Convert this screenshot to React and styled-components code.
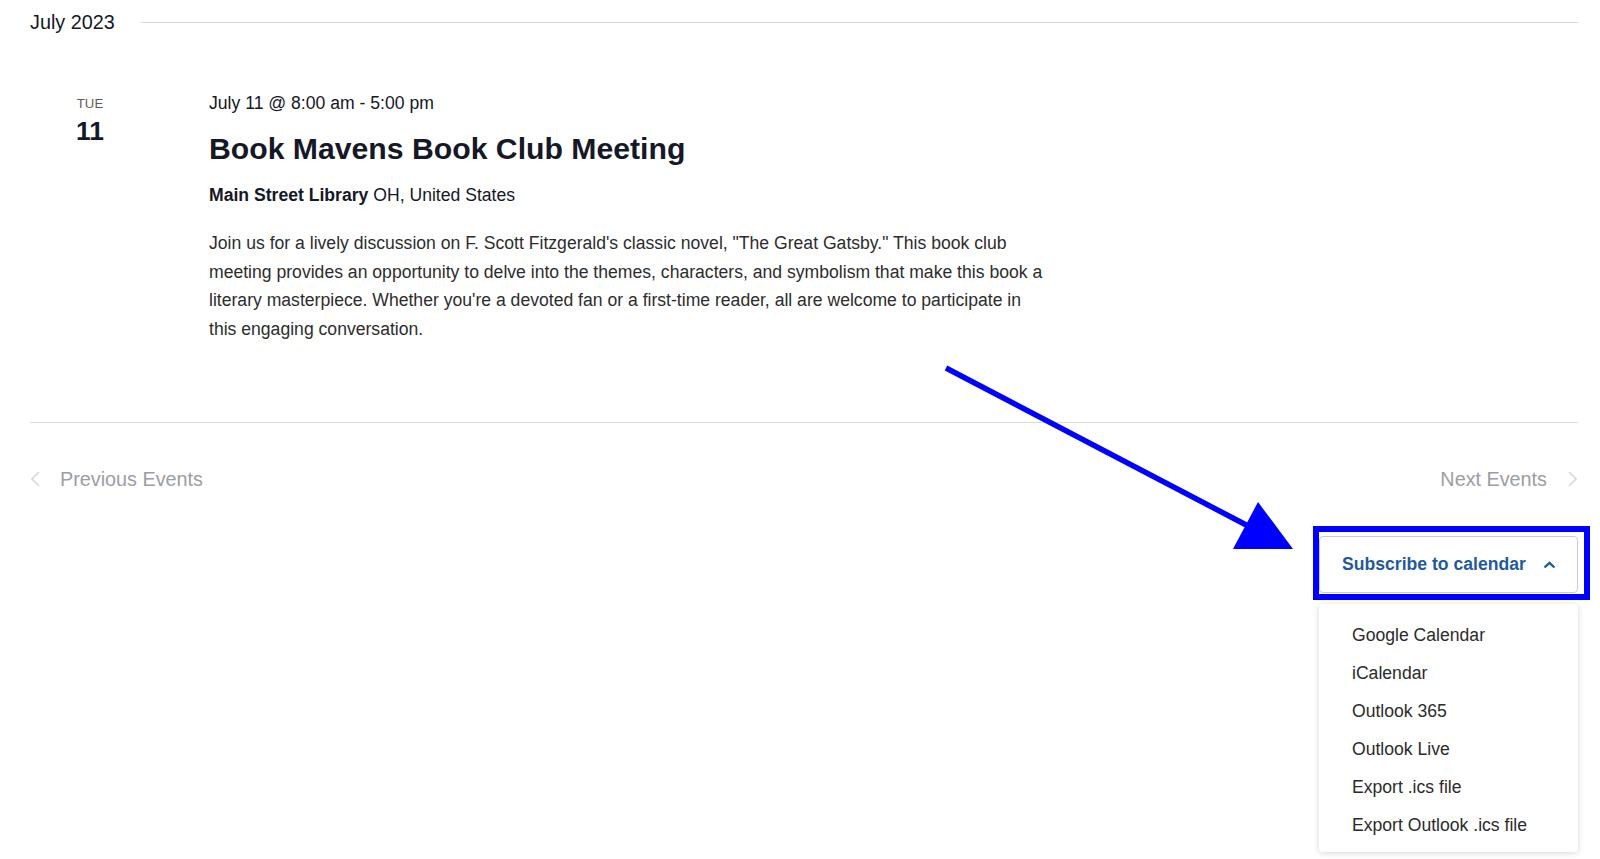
import styled, { createGlobalStyle } from 'styled-components'

const GlobalStyle = createGlobalStyle`
  html, body {
    margin: 0;
    padding: 0;
    background: #fff;
    font-family: "Liberation Sans", Arial, sans-serif;
    color: #141827;
  }
  * { box-sizing: border-box; }
`

const Page = styled.div`
  position: relative;
  min-height: 859px;
  padding: 10px 22px 0 30px;
`

const MonthHeader = styled.div`
  display: flex;
  align-items: center;
  gap: 26px;
`

const MonthLabel = styled.h2`
  margin: 0;
  font-size: 19.8px;
  font-weight: 400;
  line-height: 24px;
  color: #141827;
`

const Rule = styled.div`
  flex: 1;
  height: 1px;
  background: #d3d8e6;
`

const EventRow = styled.div`
  display: flex;
  margin-top: 56px;
`

const DateCol = styled.div`
  width: 120px;
  margin-right: 59px;
  display: flex;
  flex-direction: column;
  align-items: center;
  padding-top: 6px;
`

const DayName = styled.span`
  font-size: 13.2px;
  line-height: 16px;
  color: #5d5d5d;
  text-transform: uppercase;
`

const DayNum = styled.span`
  margin-top: 4px;
  font-size: 26.4px;
  font-weight: 700;
  line-height: 30px;
  color: #141827;
`

const Details = styled.div`
  flex: 1;
`

const Time = styled.div`
  font-size: 17.6px;
  line-height: 26px;
`

const Title = styled.h3`
  margin: 15px 0 0;
  font-size: 30.2px;
  font-weight: 700;
  line-height: 36px;
`

const Venue = styled.div`
  margin-top: 15px;
  font-size: 17.6px;
  line-height: 26px;

  strong { font-weight: 700; }
`

const Description = styled.p`
  margin: 21px 0 0;
  max-width: 838px;
  font-size: 17.6px;
  line-height: 28.6px;
  color: #2d2d2d;
`

const Divider = styled.div`
  margin-top: 79px;
  height: 1px;
  background: #dcdcdc;
`

const Nav = styled.nav`
  margin-top: 42px;
  display: flex;
  justify-content: space-between;
  font-size: 19.8px;
  line-height: 28px;
  color: #9b9ea4;
`

const NavLink = styled.span`
  display: flex;
  align-items: center;
  gap: ${p => p.$gap || 19}px;
`

const SubscribeRow = styled.div`
  margin-top: 43px;
  display: flex;
  justify-content: flex-end;
`

const SubscribeWrap = styled.div`
  width: 259px;
`

const ButtonFrame = styled.div`
  position: relative;
`

const SubscribeButton = styled.button`
  width: 100%;
  height: 57px;
  display: flex;
  align-items: center;
  gap: 17px;
  padding: 0 0 0 22px;
  background: #fff;
  border: 1px solid #c3cce0;
  border-radius: 4px;
  font-family: inherit;
  font-size: 17.6px;
  font-weight: 700;
  color: #1f5b9c;
  white-space: nowrap;
`

const Highlight = styled.div`
  position: absolute;
  top: -10px;
  left: -6px;
  right: -12px;
  bottom: -7px;
  border: 6px solid #0000ff;
  pointer-events: none;
`

const Dropdown = styled.ul`
  list-style: none;
  margin: 11px 0 0;
  padding: 12px 0 8px;
  background: #fff;
  border-radius: 4px;
  box-shadow: 0 1px 6px rgba(0, 0, 0, 0.16);
`

const Item = styled.li`
  padding-left: 33px;
  font-size: 17.6px;
  line-height: 38px;
  color: #2b2b2b;
`

const ArrowMark = styled.svg`
  position: absolute;
  left: 940px;
  top: 360px;
  pointer-events: none;
`

const Chevron = ({ dir }) => (
  <svg width="11" height="16" viewBox="0 0 11 16">
    <polyline
      points={dir === 'left' ? '9,1 2,8 9,15' : '2,1 9,8 2,15'}
      fill="none"
      stroke="#d6d6d6"
      strokeWidth="1.6"
    />
  </svg>
)

const calendars = [
  'Google Calendar',
  'iCalendar',
  'Outlook 365',
  'Outlook Live',
  'Export .ics file',
  'Export Outlook .ics file',
]

const App = () => {
  return (
    <Page>
      <GlobalStyle />
      <MonthHeader>
        <MonthLabel>July 2023</MonthLabel>
        <Rule />
      </MonthHeader>

      <EventRow>
        <DateCol>
          <DayName>Tue</DayName>
          <DayNum>11</DayNum>
        </DateCol>
        <Details>
          <Time>July 11 @ 8:00 am - 5:00 pm</Time>
          <Title>Book Mavens Book Club Meeting</Title>
          <Venue><strong>Main Street Library</strong> OH, United States</Venue>
          <Description>
            Join us for a lively discussion on F. Scott Fitzgerald's classic novel, "The Great Gatsby." This book club
            meeting provides an opportunity to delve into the themes, characters, and symbolism that make this book a
            literary masterpiece. Whether you're a devoted fan or a first-time reader, all are welcome to participate in
            this engaging conversation.
          </Description>
        </Details>
      </EventRow>

      <Divider />

      <Nav>
        <NavLink>
          <Chevron dir="left" />
          Previous Events
        </NavLink>
        <NavLink $gap={20}>
          Next Events
          <Chevron dir="right" />
        </NavLink>
      </Nav>

      <SubscribeRow>
        <SubscribeWrap>
          <ButtonFrame>
            <SubscribeButton>
              Subscribe to calendar
              <svg width="13" height="8" viewBox="0 0 13 8">
                <polyline points="1.5,6.5 6.5,1.8 11.5,6.5" fill="none" stroke="#1f5b9c" strokeWidth="2.4" />
              </svg>
            </SubscribeButton>
            <Highlight />
          </ButtonFrame>
          <Dropdown>
            {calendars.map(c => <Item key={c}>{c}</Item>)}
          </Dropdown>
        </SubscribeWrap>
      </SubscribeRow>

      <ArrowMark width="360" height="195" viewBox="0 0 360 195">
        <line x1="6" y1="8" x2="312" y2="168" stroke="#0000ff" strokeWidth="5.5" />
        <polygon points="318,142 293,189 353,189" fill="#0000ff" />
      </ArrowMark>
    </Page>
  )
}

export default App
